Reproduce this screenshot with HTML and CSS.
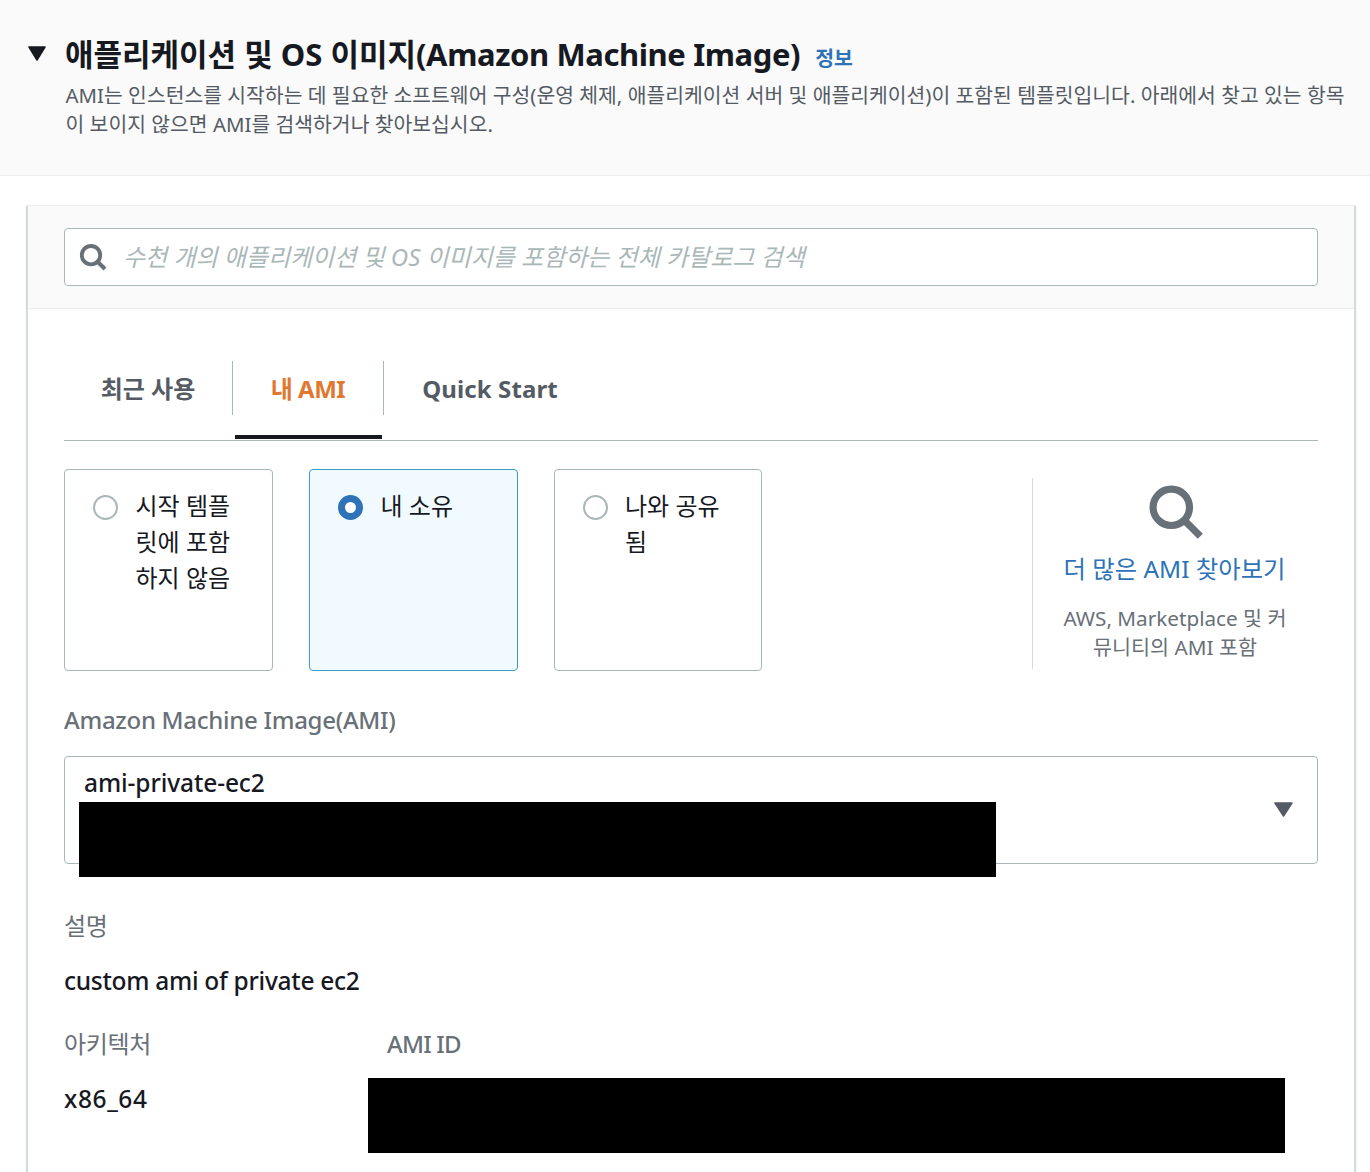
FILE: index.html
```html
<!DOCTYPE html>
<html lang="ko">
<head>
<meta charset="utf-8">
<title>Amazon Machine Image</title>
<link rel="stylesheet" href="styles.css">
</head>
<body>
<header class="header">
  <svg class="header-caret" width="18" height="15" viewBox="0 0 18 15"><path d="M1 1H17L9 14Z" fill="currentColor" stroke="currentColor" stroke-width="1.5" stroke-linejoin="round"/></svg>
  <div class="header-text">
    <div class="title-row">
      <h1 class="title">애플리케이션 및 OS 이미지<span class="title-latin">(Amazon Machine Image)</span></h1>
      <a class="info">정보</a>
    </div>
    <p class="desc">AMI는 인스턴스를 시작하는 데 필요한 소프트웨어 구성(운영 체제, 애플리케이션 서버 및 애플리케이션)이 포함된 템플릿입니다. 아래에서 찾고 있는 항목<br>이 보이지 않으면 AMI를 검색하거나 찾아보십시오.</p>
  </div>
</header>
<main class="card">
  <div class="search-bar">
    <label class="search">
      <svg class="search-icon" width="28" height="28" viewBox="0 0 28 28" fill="none" stroke="currentColor" stroke-width="3.8"><circle cx="12" cy="12.2" r="9.2"/><path d="M18.3 18.5L26 26" stroke-width="4"/></svg>
      <span class="placeholder">수천 개의 애플리케이션 및 OS 이미지를 포함하는 전체 카탈로그 검색</span>
    </label>
  </div>
  <div class="body">
    <nav class="tabs">
      <div class="tab tab-recent"><span class="tab-label">최근 사용</span></div>
      <div class="tab tab-mine"><span class="tab-label">내 AMI</span></div>
      <div class="tab tab-quick"><span class="tab-label">Quick Start</span></div>
    </nav>
    <section class="options">
      <div class="tile"><span class="radio"></span><span class="tile-label">시작 템플<br>릿에 포함<br>하지 않음</span></div>
      <div class="tile tile-selected"><span class="radio radio-on"></span><span class="tile-label">내 소유</span></div>
      <div class="tile tile-last"><span class="radio"></span><span class="tile-label">나와 공유<br>됨</span></div>
      <aside class="browse">
        <svg class="browse-icon" width="54" height="54" viewBox="0 0 54 54" fill="none" stroke="currentColor" stroke-width="7.2"><circle cx="22.3" cy="22.3" r="18.2"/><path d="M35 35L51.3 51.3"/></svg>
        <a class="browse-link">더 많은 AMI 찾아보기</a>
        <p class="browse-note">AWS, Marketplace 및 커<br>뮤니티의 AMI 포함</p>
      </aside>
    </section>
    <div class="label label-ami">Amazon Machine Image(AMI)</div>
    <div class="select">
      <span class="value value-select">ami-private-ec2</span>
      <div class="redacted redacted-select"></div>
      <svg class="select-caret" width="19" height="15" viewBox="0 0 19 15"><path d="M1 1H18L9.5 14Z" fill="currentColor" stroke="currentColor" stroke-width="1.5" stroke-linejoin="round"/></svg>
    </div>
    <div class="label label-desc">설명</div>
    <div class="value value-desc">custom ami of private ec2</div>
    <div class="details">
      <div class="detail-arch">
        <div class="label label-arch">아키텍처</div>
        <div class="value value-arch">x86_64</div>
      </div>
      <div class="detail-id">
        <div class="label label-id">AMI ID</div>
        <div class="redacted redacted-id"></div>
      </div>
    </div>
  </div>
</main>
</body>
</html>
```
FILE: styles.css
```css
* { box-sizing: border-box; }
body {
  margin: 0;
  height: 1172px;
  overflow: hidden;
  background: #fff;
  color: #16191f;
  font-family: "Noto Sans", "Noto Sans CJK KR", sans-serif;
  font-size: 24px;
  line-height: 36px;
  white-space: nowrap;
}
h1, p { margin: 0; }
.header {
  display: flex;
  height: 176px;
  padding: 34px 0 0 28px;
  background: #fafafa;
  border-bottom: 1px solid #eaeded;
}
.header-caret { margin: 12px 19px 0 0; flex: none; }
.title-row { display: flex; align-items: baseline; gap: 15px; height: 47px; }
.title { font-size: 31px; line-height: 40px; font-weight: 700; letter-spacing: 0; }
.title-latin { letter-spacing: -0.4px; }
.info { color: #2e73b8; font-size: 20.5px; font-weight: 700; }
.desc { padding-left: 0.5px; color: #545b64; font-size: 20.4px; line-height: 29px; letter-spacing: 0.02px; }
.card {
  width: 1328px;
  height: 980px;
  margin: 29px 0 0 27px;
  border: 1px solid #d5dbdb;
  border-top-color: #eaeded;
  box-shadow: -1px 1px 1px #d5dbdb, 1px 1px 1px #d5dbdb;
}
.search-bar {
  height: 103px;
  padding: 22px 36px 0;
  background: #fafafa;
  border-bottom: 1px solid #eaeded;
}
.search {
  display: flex;
  align-items: center;
  height: 58px;
  padding-left: 14px;
  background: #fff;
  border: 1px solid #aab7b8;
  border-radius: 4px;
}
.search-icon { color: #687078; }
.placeholder { margin-left: 16px; color: #aab7b8; font-style: italic; }
.body { padding: 52px 36px 0; }
.tabs { display: flex; height: 80px; border-bottom: 1px solid #aab7b8; font-weight: 700; color: #545b64; }
.tab { height: 54px; padding-top: 10px; border-right: 1px solid #aab7b8; text-align: center; }
.tab-recent { width: 169px; }
.tab-mine { position: relative; width: 151px; color: #e07830; letter-spacing: -0.5px; }
.tab-mine::after {
  content: "";
  position: absolute;
  left: 2px;
  top: 74px;
  width: 147px;
  height: 4px;
  background: #16191f;
}
.tab-quick { width: 212px; border-right: 0; letter-spacing: 0.1px; }
.options { display: flex; height: 202px; margin-top: 28px; }
.tile {
  display: flex;
  width: 209px;
  margin-right: 36px;
  padding: 18px 0 0 28px;
  border: 1px solid #aab7b8;
  border-radius: 4px;
}
.tile-last { width: 208px; padding-left: 27.5px; }
.tile-selected { background: #f1faff; border-color: #3d9cc4; }
.radio {
  flex: none;
  width: 25px;
  height: 25px;
  margin: 7px 17.5px 0 0;
  border: 2px solid #aab7b8;
  border-radius: 50%;
  background: #fff;
}
.radio-on { border: 7px solid #2e73b8; }
.browse {
  display: flex;
  flex-direction: column;
  align-items: center;
  width: 286px;
  height: 191px;
  margin: 9px 0 0 234px;
  border-left: 1px solid #d5dbdb;
  text-align: center;
  color: #687078;
}
.browse-icon { margin-top: 7px; }
.browse-link { margin: 12px 2px 0 0; color: #2e73b8; font-size: 24.4px; }
.browse-note { margin: 17px 1px 0 0; font-size: 20.7px; line-height: 29px; }
.label { color: #687078; }
.label-ami { margin-top: 31px; font-weight: 500; letter-spacing: -0.28px; }
.select {
  position: relative;
  height: 108px;
  margin-top: 18px;
  padding: 8px 0 0 19px;
  border: 1px solid #aab7b8;
  border-radius: 4px;
}
.redacted { width: 917px; height: 75px; background: #000; }
.redacted-select { position: absolute; left: 14px; top: 45px; }
.select-caret { position: absolute; right: 24px; top: 45px; color: #545b64; }
.label-desc { margin-top: 44px; letter-spacing: -0.3px; }
.value { font-size: 24.5px; font-weight: 500; }
.value-select { letter-spacing: -0.1px; }
.value-desc { margin-top: 19px; letter-spacing: -0.28px; }
.details { display: flex; margin-top: 27px; }
.detail-arch { width: 304px; }
.label-arch { letter-spacing: -0.3px; }
.value-arch { margin-top: 19px; letter-spacing: 0.6px; }
.label-id { padding-left: 19px; font-weight: 500; letter-spacing: -0.8px; }
.redacted-id { margin-top: 16px; }
```
